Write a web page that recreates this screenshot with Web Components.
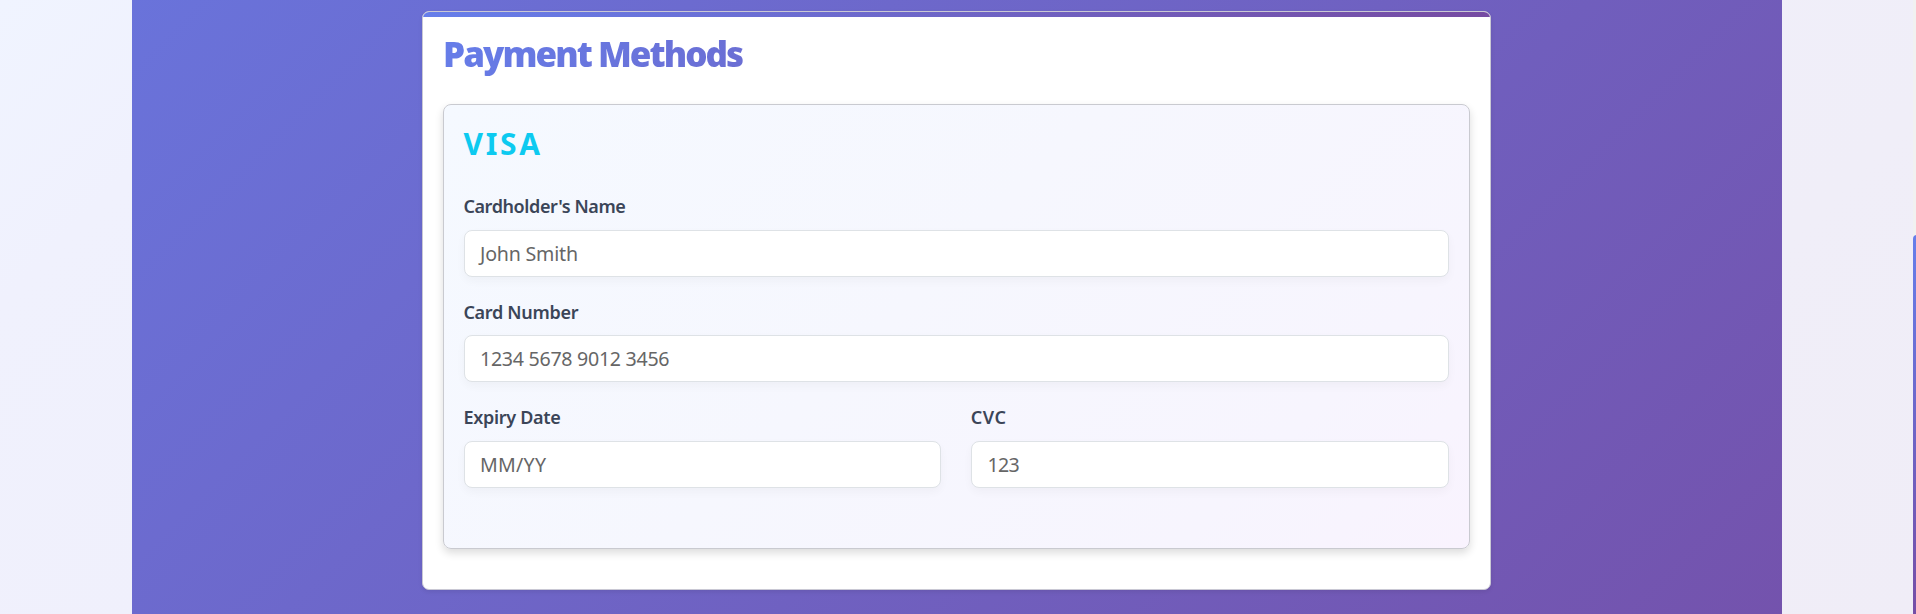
<!DOCTYPE html>
<html lang="en">
<head>
<meta charset="utf-8">
<title>Payment Methods</title>
<style>
html,body{margin:0;height:100%;overflow:hidden}
body{font-family:"Noto Sans","Open Sans",sans-serif;background:linear-gradient(135deg,#f0f4ff 0%,#f0f1fd 12%,#f0f0fc 30%,#f0eef8 80%,#f0edf7 100%)}
</style>
</head>
<body>
<payment-page>
  <payment-card heading="Payment Methods">
    <card-panel brand="VISA">
      <form-field label="Cardholder's Name" hint="John Smith" style="--ls:-.4px;--is:-.2px"></form-field>
      <form-field label="Card Number" hint="1234 5678 9012 3456" style="--ls:-.3px;--is:-.28px"></form-field>
      <field-row>
        <form-field label="Expiry Date" hint="MM/YY" style="--ls:-.3px;--is:.25px"></form-field>
        <form-field label="CVC" hint="123" style="--ls:.5px;--is:-.6px"></form-field>
      </field-row>
    </card-panel>
  </payment-card>
</payment-page>
<script>
const define=(name,html,attrs={})=>customElements.define(name,class extends HTMLElement{
  constructor(){
    super();
    const t=document.createElement('template');
    t.innerHTML=html;
    this.attachShadow({mode:'open'}).append(t.content.cloneNode(true));
  }
  connectedCallback(){
    for(const [a,sel] of Object.entries(attrs)) this.shadowRoot.querySelector(sel).textContent=this.getAttribute(a);
  }
});
define('page-scrollbar',`<style>
:host{display:block;width:3px;height:614px;background:#f1f1f1;overflow:hidden;padding-top:235px;box-sizing:border-box}
i{display:block;width:8px;height:400px;border-radius:4px;background:linear-gradient(#667eea,#764ba2)}
</style><i></i>`);
define('payment-page',`<style>
:host{display:grid;grid-template-columns:132px 1650px 1fr 3px;height:614px}
main{grid-column:2;padding:11px 291px 0 290px;background:linear-gradient(135deg,#667eea,#764ba2);background-size:100% 1930px;background-position:0 -780px}
page-scrollbar{grid-column:4}
</style><main><slot></slot></main><page-scrollbar></page-scrollbar>`);
define('payment-card',`<style>
:host{display:block;box-sizing:border-box;height:579px;border:1px solid #c9c8d4;border-radius:7px;background:#fff;overflow:hidden;box-shadow:0 2px 4px rgba(0,0,0,.08)}
.bar{height:5px;background:linear-gradient(90deg,#667eea,#764ba2)}
.body{padding:13px 20px 0}
h2{margin:0 0 26px;height:48px;line-height:48px;font-family:"Open Sans","Noto Sans",sans-serif;font-size:35px;font-weight:800;letter-spacing:-1.95px;white-space:nowrap;background:linear-gradient(135deg,#667eea,#764ba2);-webkit-background-clip:text;background-clip:text;color:transparent}
</style><div class="bar"></div><div class="body"><h2></h2><slot></slot></div>`,{heading:'h2'});
define('card-panel',`<style>
:host{display:block;box-sizing:border-box;height:445px;border:1px solid #c9cad0;border-radius:8px;padding:19px 20px 0;background:linear-gradient(135deg,#f5f9ff,#f6f7fe 45%,#f7f5fe 80%,#f9f3fe);box-shadow:0 4px 8px rgba(0,0,0,.14)}
.brand{height:40px;line-height:40px;font-size:30px;font-weight:700;letter-spacing:2.7px;color:#0dcaf0;margin:0 0 27px -.5px}
.fields{display:flex;flex-direction:column;gap:20px}
</style><div class="brand"></div><div class="fields"><slot></slot></div>`,{brand:'.brand'});
define('field-row',`<style>:host{display:grid;grid-template-columns:477px 1fr;gap:30.4px}</style><slot></slot>`);
define('form-field',`<style>
:host{display:block}
.label{display:block;height:31px;line-height:31px;margin:0 0 7.5px -.6px;font-size:18px;font-weight:600;letter-spacing:var(--ls);color:#3b4558}
.box{box-sizing:border-box;height:47px;line-height:46px;padding:0 15px;border:1px solid #dee2e6;border-radius:8px;background:#fff;box-shadow:0 4px 10px rgba(0,0,0,.035);font-size:19.6px;letter-spacing:var(--is);color:#666}
</style><span class="label"></span><div class="box"></div>`,{label:'.label',hint:'.box'});
</script>
</body>
</html>
